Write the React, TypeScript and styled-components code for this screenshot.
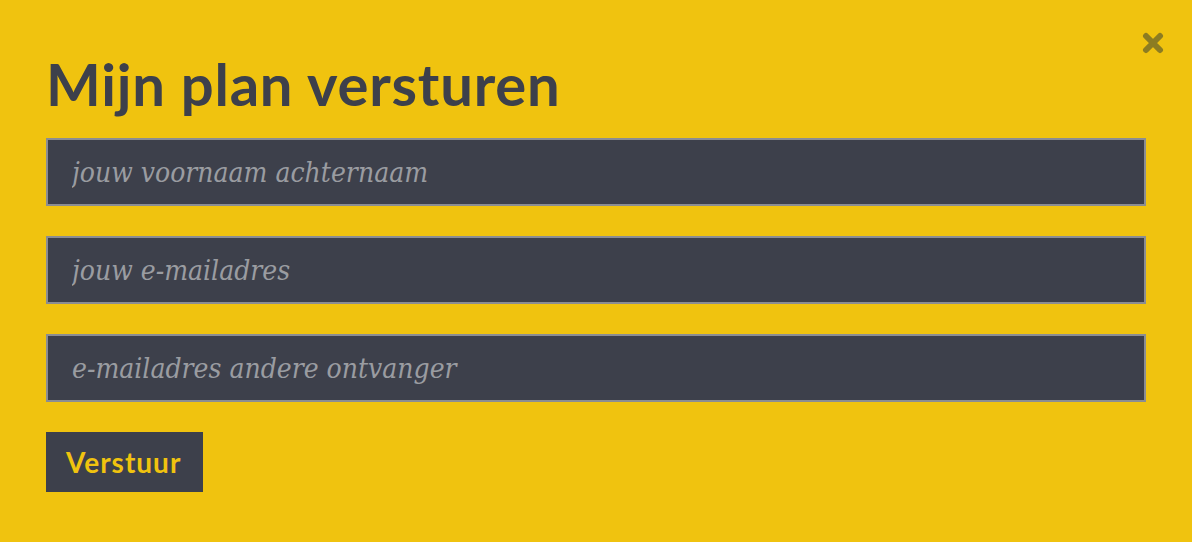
import React from 'react';
import styled, { createGlobalStyle } from 'styled-components';

const GlobalStyle = createGlobalStyle`
  html, body {
    margin: 0;
    padding: 0;
    background: #f0c30f;
  }
  * {
    box-sizing: border-box;
  }
`;

const Modal = styled.div`
  position: relative;
  width: 1192px;
  height: 542px;
  padding: 50px 46px 0 46px;
  background: #f0c30f;
`;

const Close = styled.button`
  position: absolute;
  top: 32px;
  right: 28px;
  width: 22px;
  height: 22px;
  padding: 0;
  border: none;
  background: none;
  cursor: pointer;
`;

const Title = styled.h1`
  margin: 0 0 20px 0;
  font-family: Lato, 'Open Sans', sans-serif;
  font-weight: 700;
  font-size: 58px;
  line-height: 68px;
  letter-spacing: 0.8px;
  color: #3d404b;
`;

const Form = styled.form`
  display: flex;
  flex-direction: column;
  gap: 30px;
  align-items: flex-start;
`;

const Field = styled.input`
  width: 100%;
  height: 68px;
  padding: 0 24px;
  border: 2px solid #8b8d92;
  background: #3d404b;
  color: #e6e6e6;
  font-family: 'DejaVu Serif', serif;
  font-stretch: condensed;
  font-style: italic;
  font-size: 28px;
  outline: none;

  &::placeholder {
    color: #9a9ca1;
    opacity: 1;
  }
`;

const Submit = styled.button`
  height: 60px;
  padding: 0 22px 0 20px;
  border: none;
  background: #3d404b;
  color: #f0c30f;
  font-family: Lato, 'Open Sans', sans-serif;
  font-weight: 700;
  font-size: 28px;
  letter-spacing: 1px;
  cursor: pointer;
`;

export default function App() {
  return (
    <>
      <GlobalStyle />
      <Modal>
        <Close aria-label="Sluiten">
          <svg width="22" height="22" viewBox="0 0 22 22">
            <path d="M4 4 L18 18 M18 4 L4 18" stroke="#8c7c22" strokeWidth="6" strokeLinecap="round" />
          </svg>
        </Close>
        <Title>Mijn plan versturen</Title>
        <Form onSubmit={(e) => e.preventDefault()}>
          <Field type="text" placeholder="jouw voornaam achternaam" />
          <Field type="email" placeholder="jouw e-mailadres" />
          <Field type="email" placeholder="e-mailadres andere ontvanger" />
          <Submit type="submit">Verstuur</Submit>
        </Form>
      </Modal>
    </>
  );
}
